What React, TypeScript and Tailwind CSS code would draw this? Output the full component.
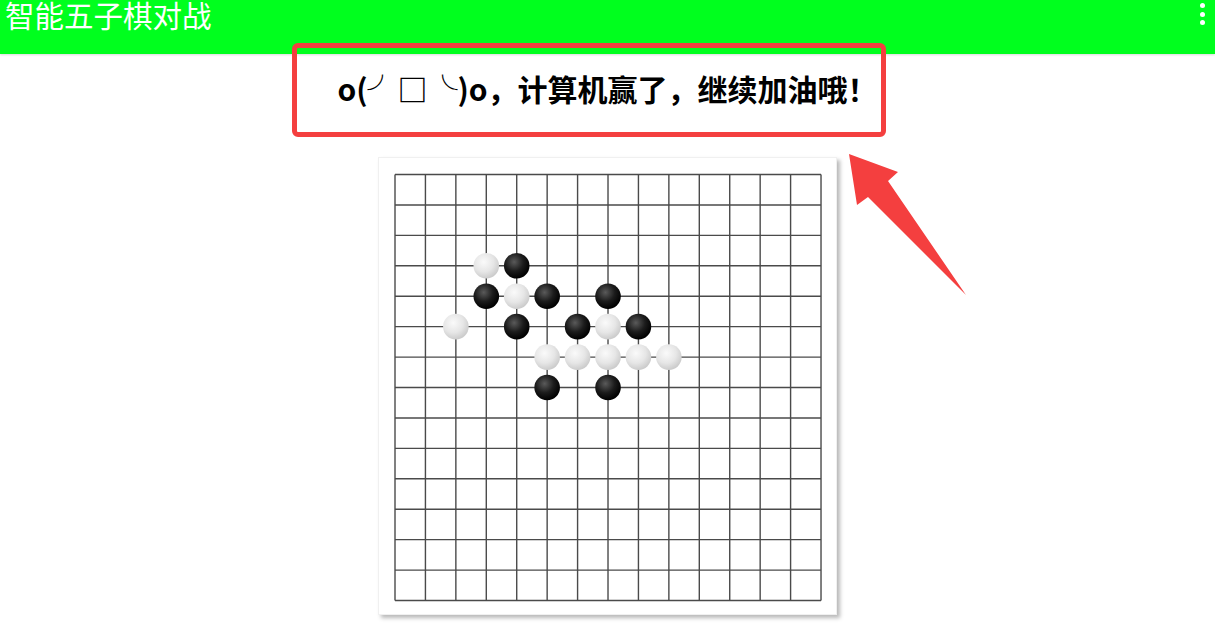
import React from 'react';

const CELL = 30.43;
const OFF_X = 16;
const OFF_Y = 16.5;

type Stone = [number, number, 'b' | 'w'];

const stones: Stone[] = [
  [3, 3, 'w'], [4, 3, 'b'],
  [3, 4, 'b'], [4, 4, 'w'], [5, 4, 'b'], [7, 4, 'b'],
  [2, 5, 'w'], [4, 5, 'b'], [6, 5, 'b'], [7, 5, 'w'], [8, 5, 'b'],
  [5, 6, 'w'], [6, 6, 'w'], [7, 6, 'w'], [8, 6, 'w'], [9, 6, 'w'],
  [5, 7, 'b'], [7, 7, 'b'],
];

const Board = () => {
  const lines = Array.from({ length: 15 }, (_, i) => i);
  const end = 14 * CELL;
  return (
    <svg width="457" height="456" viewBox="0 0 457 456">
      <defs>
        <radialGradient id="blackStone" cx="40%" cy="35%" r="65%">
          <stop offset="0%" stopColor="#5a5a5a" />
          <stop offset="55%" stopColor="#1c1c1c" />
          <stop offset="100%" stopColor="#000" />
        </radialGradient>
        <radialGradient id="whiteStone" cx="40%" cy="35%" r="65%">
          <stop offset="0%" stopColor="#fafafa" />
          <stop offset="60%" stopColor="#e6e6e6" />
          <stop offset="100%" stopColor="#cccccc" />
        </radialGradient>
      </defs>
      <g stroke="#4a4a4a" strokeWidth="1.4">
        {lines.map((i) => (
          <line key={'h' + i} x1={OFF_X} y1={OFF_Y + i * CELL} x2={OFF_X + end} y2={OFF_Y + i * CELL} />
        ))}
        {lines.map((i) => (
          <line key={'v' + i} x1={OFF_X + i * CELL} y1={OFF_Y} x2={OFF_X + i * CELL} y2={OFF_Y + end} />
        ))}
      </g>
      {stones.map(([c, r, t]) => (
        <circle
          key={`${c}-${r}`}
          cx={OFF_X + c * CELL}
          cy={OFF_Y + r * CELL}
          r="12.8"
          fill={t === 'b' ? 'url(#blackStone)' : 'url(#whiteStone)'}
        />
      ))}
    </svg>
  );
};

export default function App() {
  return (
    <div
      className="relative h-screen w-full overflow-hidden bg-white"
      style={{ fontFamily: '"Noto Sans CJK SC", "Noto Sans", sans-serif' }}
    >
      {/* action bar */}
      <div className="flex h-[54px] items-start justify-between bg-[#00ff1e] shadow-[0_1px_2px_rgba(0,0,0,0.15)]">
        <span className="ml-[5px] text-[29.5px] leading-none text-white">智能五子棋对战</span>
        <div className="mr-[10px] mt-[3px] flex flex-col gap-[3.5px]">
          <span className="h-[5px] w-[5px] rounded-full bg-white" />
          <span className="h-[5px] w-[5px] rounded-full bg-white" />
          <span className="h-[5px] w-[5px] rounded-full bg-white" />
        </div>
      </div>

      {/* result message */}
      <div className="mt-[17px] flex justify-center">
        <p className="text-[30px] font-bold leading-[34px] text-black">o(╯□╰)o，计算机赢了，继续加油哦！</p>
      </div>

      {/* board */}
      <div className="mt-[52px] flex justify-center">
        <div className="border border-[#f0f0f0] bg-white shadow-[3px_3px_4px_rgba(0,0,0,0.28)]">
          <Board />
        </div>
      </div>

      {/* annotation box */}
      <div className="pointer-events-none absolute left-[292px] top-[43px] h-[94px] w-[594px] rounded-[6px] border-[5px] border-[#f43f3f]" />

      {/* annotation arrow */}
      <svg className="pointer-events-none absolute left-0 top-0" width="1215" height="629">
        <polygon
          points="849,154 898,172 888,181 966,295 868,197 857,205"
          fill="#f43f3f"
        />
      </svg>
    </div>
  );
}
